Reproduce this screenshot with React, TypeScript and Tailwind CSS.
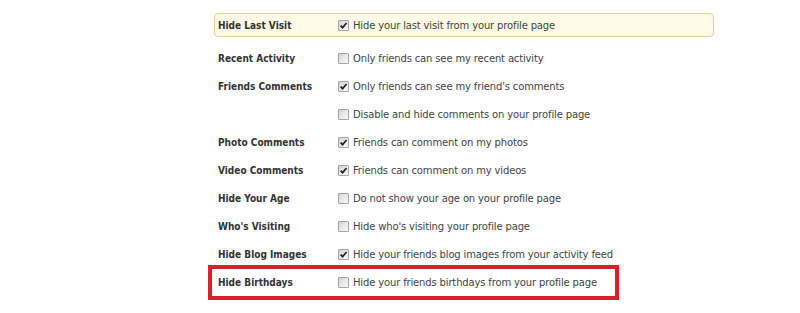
import React from "react";

type Row = { label?: string; text: string; checked: boolean };

const rows: Row[] = [
  { label: "Recent Activity", text: "Only friends can see my recent activity", checked: false },
  { label: "Friends Comments", text: "Only friends can see my friend's comments", checked: true },
  { text: "Disable and hide comments on your profile page", checked: false },
  { label: "Photo Comments", text: "Friends can comment on my photos", checked: true },
  { label: "Video Comments", text: "Friends can comment on my videos", checked: true },
  { label: "Hide Your Age", text: "Do not show your age on your profile page", checked: false },
  { label: "Who's Visiting", text: "Hide who's visiting your profile page", checked: false },
  { label: "Hide Blog Images", text: "Hide your friends blog images from your activity feed", checked: true },
];

const labelFont = { fontFamily: "'DejaVu Sans Condensed', 'DejaVu Sans', sans-serif" };

function Box({ checked }: { checked: boolean }) {
  return (
    <span className="flex h-[11px] w-[11px] shrink-0 items-center justify-center rounded-[1px] border border-[#a4a4a4] bg-gradient-to-br from-[#d6d6d6] to-[#fbfbfb]">
      {checked && (
        <svg viewBox="0 0 10 10" className="h-[9px] w-[9px]">
          <path d="M1.8 5.2 L4 7.4 L8.4 2.2" fill="none" stroke="#222" strokeWidth="1.9" />
        </svg>
      )}
    </span>
  );
}

function Cells({ label, text, checked }: Row) {
  return (
    <>
      <div className="w-[120px] shrink-0 font-bold text-[#333]" style={labelFont}>
        {label}
      </div>
      <Box checked={checked} />
      <span className="ml-[4px] whitespace-nowrap tracking-[-0.15px] text-[#444]">{text}</span>
    </>
  );
}

export default function App() {
  return (
    <div
      className="h-[313px] w-[800px] overflow-hidden bg-white text-[10px]"
      style={{ fontFamily: "'DejaVu Sans', Verdana, sans-serif" }}
    >
      <div className="ml-[214px] flex w-[500px] flex-col pt-[13px]">
        <div className="flex h-[24px] items-center rounded-[4px] border border-[#e2d495] bg-[#fffbe6] pl-[3px] pt-[1px]">
          <Cells label="Hide Last Visit" text="Hide your last visit from your profile page" checked />
        </div>
        <div className="mt-[7px] flex flex-col pl-[4px]">
          {rows.map((r, i) => (
            <div key={i} className="flex h-[28px] items-center">
              <Cells {...r} />
            </div>
          ))}
        </div>
        <div className="-ml-[6px] -mt-[3px] flex h-[35px] w-[411px] items-center border-4 border-[#d9212b] pl-[6px]">
          <Cells label="Hide Birthdays" text="Hide your friends birthdays from your profile page" checked={false} />
        </div>
      </div>
    </div>
  );
}
